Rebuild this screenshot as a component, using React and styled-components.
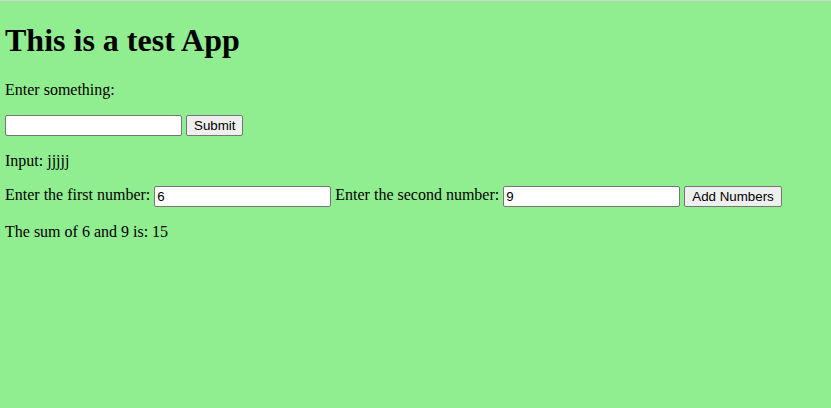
import React from "react";
import styled, { createGlobalStyle } from "styled-components";

const Global = createGlobalStyle`
  html, body { margin: 0; padding: 0; }
  body { background: #90ee90; font-family: "Liberation Serif", "Times New Roman", serif; font-size: 16px; color: #000; }
`;

const Page = styled.div`
  min-height: 100vh;
  box-sizing: border-box;
  border-top: 1px solid #d3d3d3;
  background: #90ee90;
  padding: 0 5px;
`;

const Title = styled.h1`
  font-size: 32px;
  font-weight: bold;
  margin: 21.44px 0;
`;

const P = styled.p`
  margin: 16px 0;
  line-height: normal;
`;

const Field = styled.input`
  box-sizing: border-box;
  width: 177px;
  height: 21px;
  font-family: "Liberation Sans", Arial, sans-serif;
  font-size: 13.33px;
  padding: 1px 2px;
  border: 1px solid #767676;
  border-radius: 2px;
  background: #fff;
  color: #000;
  vertical-align: middle;
  margin: 0;
`;

const Button = styled.button`
  box-sizing: border-box;
  height: 21px;
  font-family: "Liberation Sans", Arial, sans-serif;
  font-size: 13.33px;
  padding: 1px 7px;
  border: 1px solid #767676;
  border-radius: 2px;
  background: #efefef;
  color: #000;
  vertical-align: middle;
  margin: 0 0 0 4px;
`;

export default function App() {
  return (
    <>
      <Global />
      <Page>
        <Title>This is a test App</Title>
        <P>Enter something:</P>
        <P>
          <Field type="text" defaultValue="" />
          <Button>Submit</Button>
        </P>
        <P>Input: jjjjj</P>
        <P>
          Enter the first number: <Field type="text" defaultValue="6" /> Enter the second number:{" "}
          <Field type="text" defaultValue="9" />
          <Button>Add Numbers</Button>
        </P>
        <P>The sum of 6 and 9 is: 15</P>
      </Page>
    </>
  );
}
